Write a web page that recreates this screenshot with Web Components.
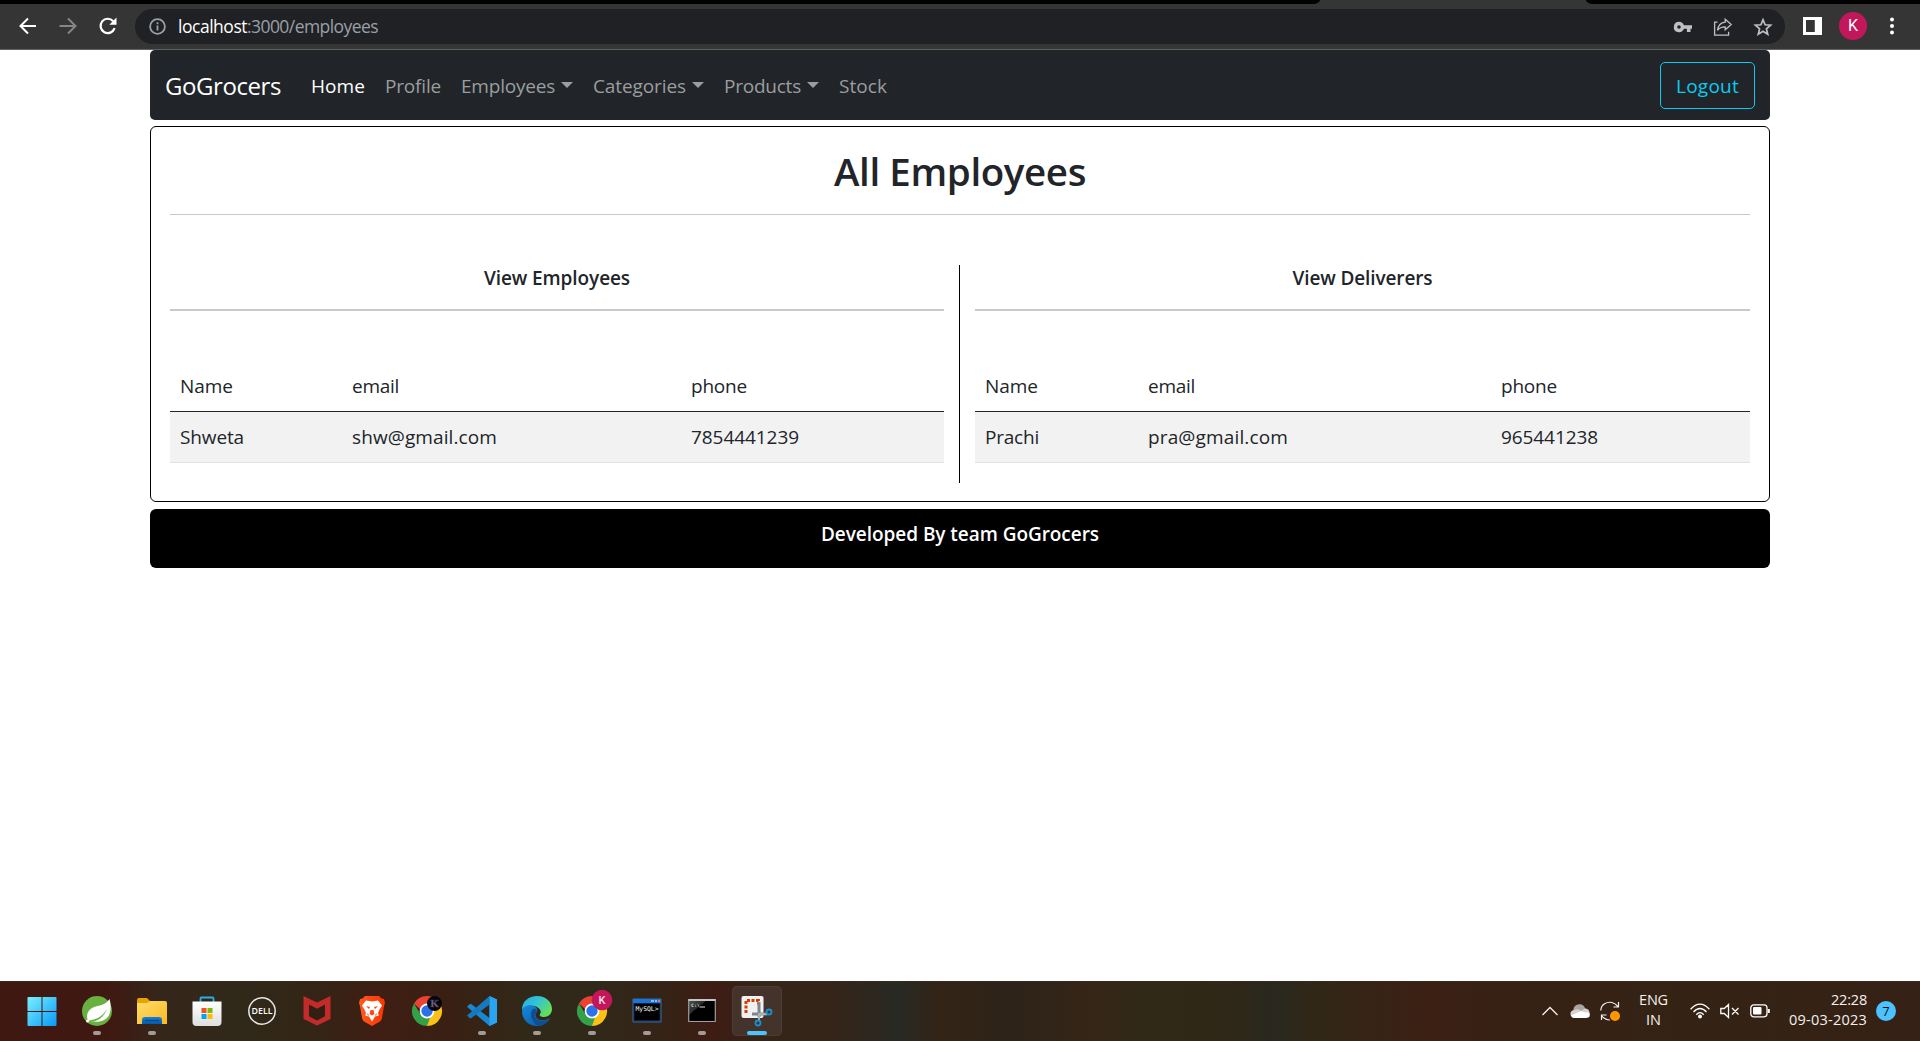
<!DOCTYPE html>
<html lang="en">
<head>
<meta charset="utf-8">
<title>GoGrocers</title>
<style>
html,body{margin:0;height:100%}
body{font-family:"Open Sans","Noto Sans",sans-serif;color:#212529;background:#fff;overflow:hidden}
desktop-shell{height:1041px}
</style>
</head>
<body>
<desktop-shell>
  <browser-bar slot="top"></browser-bar>
  <store-nav></store-nav>
  <content-card heading="All Employees">
    <people-panel caption="View Employees" caption-width="146" cols="172px 339px 1fr"
      rows='[[["Name",53],["email",47],["phone",56]],[["Shweta",64],["shw@gmail.com",145],["7854441239",108]]]'></people-panel>
    <people-panel caption="View Deliverers" caption-width="140" cols="163px 353px 1fr"
      rows='[[["Name",53],["email",47],["phone",56]],[["Prachi",54],["pra@gmail.com",140],["965441238",97]]]'></people-panel>
  </content-card>
  <page-footer label="Developed By team GoGrocers"></page-footer>
  <task-bar slot="bottom"></task-bar>
</desktop-shell>
<script>
const define=(name,html,init)=>customElements.define(name,class extends HTMLElement{
  connectedCallback(){
    if(this.shadowRoot)return;
    const t=document.createElement('template');
    t.innerHTML=typeof html==='function'?html(this):html;
    this.attachShadow({mode:'open'}).append(t.content.cloneNode(true));
    if(init)init(this);
  }
});

/* A run of text spaced evenly to fill a given width. */
define('fit-text',`<style>:host{display:inline-block;white-space:nowrap}span{display:inline-block;white-space:nowrap}</style><span><slot></slot></span>`,el=>{
  const s=el.shadowRoot.querySelector('span'),w=+el.getAttribute('w'),n=el.textContent.length;
  const now=s.getBoundingClientRect().width;
  if(now)s.style.letterSpacing=((w-now)/n)+'px';
  el.style.width=w+'px';
});

define('browser-bar',`<style>
:host{display:block;flex:none;background:#353535;border-bottom:1px solid #606060;height:49px;box-sizing:content-box}
.tabs{height:4px;display:flex;background:#353535}
.tabs i{background:#000;height:4px}
.tabs i:first-child{width:1320px;border-bottom-right-radius:7px 4px}
.tabs i:last-child{margin-left:266px;flex:1;border-bottom-left-radius:7px 4px}
.row{display:flex;align-items:center;height:44px}
svg{display:block;flex:none}
.omni{margin-left:17px;width:1650px;height:35px;border-radius:18px;background:#202124;display:flex;align-items:center;box-sizing:border-box;padding:0 12px 0 14px;margin-top:1px}
.url{margin-left:12px;font-size:17.500px;line-height:24px;color:#9aa0a6;flex:1;margin-top:-1px}
.url b{font-weight:400;color:#fff}
.av{width:28px;height:28px;border-radius:50%;background:#c2185b;color:#fff;font:16px/28px Roboto,sans-serif;text-align:center;margin-left:17px}
</style>
<div class="tabs"><i></i><i></i></div>
<div class="row">
 <svg style="margin-left:18px" width="20" height="20" viewBox="0 0 20 20" fill="none" stroke="#fff" stroke-width="2"><path d="M18 10H3M10 2.500 2.500 10l7.500 7.500"/></svg>
 <svg style="margin-left:20px" width="20" height="20" viewBox="0 0 20 20" fill="none" stroke="#868686" stroke-width="2"><path d="M1.500 10H17M10 2.500l7.500 7.500-7.500 7.500"/></svg>
 <svg style="margin-left:20px" width="20" height="20" viewBox="0 0 20 20" fill="none" stroke="#fff" stroke-width="2.200"><path d="M16.600 12.200A7.200 7.200 0 1 1 15.200 5.200"/><path d="M18.500 1.500v7.200h-7.200z" fill="#fff" stroke="none"/></svg>
 <div class="omni">
  <svg width="17" height="17" viewBox="0 0 17 17" fill="none" stroke="#9aa0a6" stroke-width="1.800"><circle cx="8.500" cy="8.500" r="7.400"/><path d="M8.500 7.500v5M8.500 4.200v2"/></svg>
  <span class="url"><b><fit-text w="69">localhost</fit-text></b><fit-text w="131">:3000/employees</fit-text></span>
  <svg width="20" height="20" viewBox="0 0 20 20"><path fill="#bfc0c2" fill-rule="evenodd" d="M6 4.800a5.200 5.200 0 0 1 4.900 3.500H19v3.500h-1.500v3.300h-3.600v-3.300h-3A5.200 5.200 0 1 1 6 4.800zm0 3.400a1.800 1.800 0 1 0 0 3.600 1.800 1.800 0 0 0 0-3.600z"/></svg>
  <svg style="margin-left:20px" width="20" height="20" viewBox="0 0 20 20" fill="none" stroke="#bfc0c2" stroke-width="1.300"><path d="M4.500 5.200H1.600v13h14v-3.500M12.200 2.200l6 5.300-6 5.300V9.900c-4 0-6 1-7.700 3.500.6-4.500 3.300-7.800 7.700-8.200z"/></svg>
  <svg style="margin-left:20px" width="20" height="20" viewBox="0 0 20 20" fill="none" stroke="#bfc0c2" stroke-width="1.700"><path d="m10 2.700 2.100 5.100 5.500.4-4.200 3.600 1.300 5.400-4.700-2.900-4.700 2.900 1.300-5.400-4.200-3.600 5.500-.4z"/></svg>
 </div>
 <svg style="margin-left:18px" width="19" height="18" viewBox="0 0 19 18"><path fill="#fff" fill-rule="evenodd" d="M0 0h19v18H0zM3 3v12h8.800V3z"/></svg>
 <div class="av">K</div>
 <svg style="margin-left:22px" width="6" height="18" viewBox="0 0 6 18" fill="#fff"><circle cx="3" cy="2.500" r="2"/><circle cx="3" cy="9" r="2"/><circle cx="3" cy="15.500" r="2"/></svg>
</div>`);

define('nav-link',el=>`<style>
:host{display:flex;align-items:center;padding:0 10px;font-size:19px;line-height:30px;color:#9b9d9e}
:host([active]){color:#fff}
i{margin:-2px 0 0 6px;border:6px solid transparent;border-top-color:currentColor;border-bottom:0}
</style><fit-text w="${el.getAttribute('w')}">${el.getAttribute('label')}</fit-text>${el.hasAttribute('menu')?'<i></i>':''}`);

define('store-nav',`<style>
:host{display:flex;align-items:center;height:70px;box-sizing:border-box;padding:0 15px;background:#212529;border-radius:5px;color:#fff}
.brand{font-size:24px;line-height:38px;margin:1px 20px 0 0}
nav{display:flex;flex:1;margin-top:2px}
button{all:unset;box-sizing:border-box;width:95px;height:47px;border:1px solid #0dcaf0;border-radius:5px;color:#0dcaf0;font-size:19px;line-height:30px;text-align:center;padding-top:2px}
</style>
<div class="brand"><fit-text w="116">GoGrocers</fit-text></div>
<nav>
<nav-link label="Home" w="54" active></nav-link><nav-link label="Profile" w="56"></nav-link>
<nav-link label="Employees" w="94" menu></nav-link><nav-link label="Categories" w="93" menu></nav-link>
<nav-link label="Products" w="77" menu></nav-link><nav-link label="Stock" w="48"></nav-link>
</nav>
<button><fit-text w="63">Logout</fit-text></button>`);

define('content-card',el=>`<style>
:host{display:block;box-sizing:border-box;height:376px;margin-top:6px;border:1px solid #000;border-radius:6px;padding:20px 19px 0}
h1{margin:0;font-size:38.500px;font-weight:600;line-height:48px;text-align:center}
hr{border:0;height:1px;background:#c8c9ca;margin:19px 0 50px}
.cols{display:grid;grid-template-columns:790px 775px;column-gap:15px;height:218px}
::slotted(:first-child){border-right:1px solid #000;padding-right:15px}
</style><h1><fit-text w="252">${el.getAttribute('heading')}</fit-text></h1><hr><div class="cols"><slot></slot></div>`);

define('people-panel',el=>{
  const rows=JSON.parse(el.getAttribute('rows'));
  const cells=r=>r.map(([t,w])=>`<span><fit-text w="${w}">${t}</fit-text></span>`).join('');
  return `<style>
:host{display:block;box-sizing:border-box;font-size:19px}
h2{margin:0;font-size:19px;font-weight:600;line-height:26px;text-align:center}
hr{border:0;height:2px;background:#c8c9ca;margin:18px 0 50px}
.r{display:grid;grid-template-columns:${el.getAttribute('cols')};padding:10px;line-height:30px;height:30px;border-bottom:1px solid #dee2e6;background:#f2f2f2}
.r.h{background:none;border-color:#212529}
</style><h2><fit-text w="${el.getAttribute('caption-width')}">${el.getAttribute('caption')}</fit-text></h2><hr>
<div class="r h">${cells(rows[0])}</div><div class="r">${cells(rows[1])}</div>`;
});

define('page-footer',el=>`<style>:host{display:block;box-sizing:border-box;height:59px;margin-top:7px;padding-top:10px;background:#000;color:#fff;border-radius:6px;text-align:center;font-size:19px;font-weight:600;line-height:30px}</style><fit-text w="278">${el.getAttribute('label')}</fit-text>`);

const chrome=`<path d="M15 15 2 7.500A15 15 0 0 1 28 7.500z" fill="#ea4335"/><path d="M15 15 28 7.500A15 15 0 0 1 15 30l-2-3z" fill="#fbc116"/><path d="M2 7.500 9 19l9 2.500L15 30A15 15 0 0 1 2 7.500z" fill="#34a047"/><path d="M15 7.500h13L20 20z" fill="#fbc116"/><path d="M2 7.500 15 7.500 9 14z" fill="#ea4335"/><circle cx="15" cy="15" r="7.400" fill="#fff"/><circle cx="15" cy="15" r="5.700" fill="#2b72e8"/>`;
const apps=[
['start',`<defs><linearGradient id="w" x1="0" y1="0" x2="30" y2="30" gradientUnits="userSpaceOnUse"><stop stop-color="#7df3ff"/><stop offset="1" stop-color="#0798f8"/></linearGradient></defs><path fill="url(#w)" d="M.5 2a1 1 0 0 1 1-1h13v14H.5zM15.500 1h13a1 1 0 0 1 1 1v13h-14zM.5 16h14v14h-13a1 1 0 0 1-1-1zM15.500 16h14v13a1 1 0 0 1-1 1h-13z"/>`,0],
['spring',`<circle cx="15" cy="15" r="15" fill="#68b13f"/><path d="M27.500 3c3 10 1 21-10 22.500-4 .5-8 0-11.500-.5-2-5-1-10 4-13C16 9 23 10 27.500 3z" fill="#fff"/><path d="M5 25c9-1 15-4 20-12-3 8-9 12.500-17 13" fill="#68b13f"/><circle cx="5.500" cy="25" r="1.500" fill="#fff"/>`,1],
['files',`<defs><linearGradient id="f" x2="1" y2="1"><stop stop-color="#ffdc6a"/><stop offset="1" stop-color="#fbbb22"/></linearGradient><linearGradient id="fb" x2="0" y2="1"><stop stop-color="#1680d8"/><stop offset="1" stop-color="#0659ac"/></linearGradient></defs><path d="M0 4a2 2 0 0 1 2-2h8l3 3v5H0z" fill="#e6a400"/><path d="M0 7h10l3-2h15a2 2 0 0 1 2 2v21H0z" fill="url(#f)"/><path d="M5 28v-4a3 3 0 0 1 3-3h14a3 3 0 0 1 3 3v4z" fill="url(#fb)"/><path d="M8 24.500h14" stroke="#064985" stroke-width="1.200"/>`,1],
['store',`<defs><linearGradient id="s" x2="0" y2="1"><stop stop-color="#fff"/><stop offset="1" stop-color="#dedede"/></linearGradient></defs><path d="M8.500 6V2.500q0-1 1-1h11q1 0 1 1V6" fill="none" stroke="#28afea" stroke-width="1.800"/><path d="M.5 5.500h29V26a4 4 0 0 1-4 4h-21a4 4 0 0 1-4-4z" fill="url(#s)"/><path d="M9.500 12h5v5h-5z" fill="#f25022"/><path d="M15.500 12h5v5h-5z" fill="#7fba00"/><path d="M9.500 18h5v5h-5z" fill="#00a4ef"/><path d="M15.500 18h5v5h-5z" fill="#ffb900"/>`,0],
['dell',`<circle cx="15" cy="15" r="13.200" fill="none" stroke="#e8e8e8" stroke-width="1.500"/><text x="4.500" y="18.200" textLength="21" lengthAdjust="spacingAndGlyphs" font-family="Open Sans" font-weight="600" font-size="8.800" fill="#fff">DELL</text>`,0],
['mcafee',`<path d="M1.500 0 15 6.500 28.500 0v23L15 29.500 1.500 23z" fill="#c32a2a"/><path d="M7 8.500l8 4.200 8-4.200v11.700l-8 4.200-8-4.200z" fill="#301f12"/>`,0],
['brave',`<defs><linearGradient id="b" x2="1"><stop stop-color="#ff5a1c"/><stop offset="1" stop-color="#ff3200"/></linearGradient></defs><path d="M8 0h14l2.500 2.500 2.500.5 1 4-1 3-2 12q-.5 2-2 3.500L15 30l-8-4.500Q5.500 24 5 22L3 10 2 7l1-4 2.500-.5z" fill="url(#b)"/><path d="M9 4.500l6 1 6-1 4 5-3 5-1 3 1 2-4 1-3 5-3-5-4-1 1-2-1-3-3-5z" fill="#fff"/><path d="M9 10l4 1-1 2zM21 10l-4 1 1 2zM13.500 14h3l1 4-2.500 1.500L12.500 18zM10 17l2 2-1 1zM20 17l-2 2 1 1z" fill="#fb4a18"/>`,0],
['chrome',chrome+`<circle cx="22.500" cy="7.500" r="7.500" fill="#05050c"/><text x="22.500" y="11.300" font-size="11" font-family="Liberation Serif" font-weight="700" text-anchor="middle" fill="#8d6a45" stroke="#3a3680" stroke-width=".5">K</text>`,0],
['code',`<path d="M22.500 0 30 3.500v23L22.500 30 0 10.800l2.500-2.500q1-.6 2 0L22.500 22z" fill="#1788d4"/><path d="M22.500 0 0 19.500l2.500 2.500q1 .6 2 0L22.500 8.500z" fill="#1678bd"/><path d="M22.500 0 30 3.500v23L22.500 30z" fill="#2ba4ef"/>`,1],
['edge',`<defs><linearGradient id="e1" x1="0" y1="0" x2="1" y2=".6"><stop stop-color="#28a8e4"/><stop offset=".5" stop-color="#32c5d4"/><stop offset="1" stop-color="#65df58"/></linearGradient><linearGradient id="e2" x2="1" y2="1"><stop stop-color="#1689dd"/><stop offset="1" stop-color="#0b559f"/></linearGradient></defs><path d="M0 14C0 5 7 0 15 0c9 0 15 6 15 13 0 5-4 8-8 8-3 0-5-1-4-3 2-2 0-7-6-8C7 9 2 11 0 14z" fill="url(#e1)"/><path d="M0 15c1-5 7-7 12-5 4 2 4 5 2 7-2 6 5 10 14 5-3 5-7 8-13 8C6 30 0 23 0 15z" fill="url(#e2)"/><path d="M11 13c-4 4-2 13 5 17 5 0 9-3 12-7-8 5-18 0-14-6 2-3 0-5-3-4z" fill="#0e4f91"/>`,1],
['chrome2',chrome+`<circle cx="25" cy="4" r="10.300" fill="#c2185b"/><text x="25" y="8" font-size="11" font-family="Roboto" font-weight="500" text-anchor="middle" fill="#f4dbe5">K</text>`,1],
['mysql',`<path d="M1 3h28v23H1z" fill="#0d2450" stroke="#497ba5" stroke-width=".8"/><path d="M1 3h28v4H1z" fill="#1974da"/><path d="M19 4h3v2h-3zM23 4h2v2h-2z" fill="#88baf1"/><path d="M26 4h2v2h-2z" fill="#ec7558"/><path d="M2.500 8h25v16h-25z" fill="#000"/><text x="3.500" y="15.200" textLength="23" lengthAdjust="spacingAndGlyphs" font-family="DejaVu Sans Mono" font-size="6.500" fill="#fff">MySQL&gt;</text>`,1],
['cmd',`<defs><linearGradient id="c" x2="1" y2="1"><stop stop-color="#555"/><stop offset=".35" stop-color="#292929"/><stop offset=".36" stop-color="#000"/></linearGradient></defs><path d="M1.700 3.500h26.600v22H1.700z" fill="url(#c)" stroke="#9b9da0" stroke-width="1.200"/><path d="M1.500 4h27" stroke="#c3c5c8" stroke-width="2"/><text x="4" y="11" textLength="9" lengthAdjust="spacingAndGlyphs" font-family="DejaVu Sans Mono" font-weight="700" font-size="4.500" fill="#ddd">C:\\</text><path d="M13 11h5" stroke="#ddd"/>`,1],
['snip',`<g transform="translate(-1 0)"><rect x=".5" y="0" width="22" height="22" rx="2" fill="#f1f1f1"/><path d="M5 17V4.500h12.500v4" fill="none" stroke="#d83b01" stroke-width="3" stroke-dasharray="3 1.500"/><path d="M18 6v15M11 18h15" stroke="#80858b" stroke-width="3"/><path d="M18 17v7M18 18h8" stroke="#aab0b5" stroke-width="2"/><circle cx="17" cy="27" r="2.500" fill="none" stroke="#1592d4" stroke-width="1.800"/><circle cx="28" cy="16" r="2.500" fill="none" stroke="#1592d4" stroke-width="1.800"/></g>`,2]
];
define('app-icon',el=>{const a=apps[+el.getAttribute('index')];return `<style>
:host{display:flex;flex-direction:column;align-items:center;width:55px;height:58px}
.tile{box-sizing:border-box;width:50px;height:50px;margin-top:4px;border-radius:5px;display:flex;flex-direction:column;align-items:center;padding-top:10px}
.on{background:#43332a;box-shadow:inset 0 0 0 1px #4d3c31}
svg{display:block;overflow:visible}
i{margin-top:5px;height:4px;border-radius:2px;width:8px;background:#a49b96}
.on i{width:20px;background:#4cc2ff}
</style><div class="tile ${a[2]===2?'on':''}"><svg width="30" height="30" viewBox="0 0 30 30">${a[1]}</svg>${a[2]?'<i></i>':''}</div>`});

define('task-bar',`<style>
:host{display:flex;flex:none;align-items:center;box-sizing:border-box;height:60px;padding:0 24px 1px 14px;color:#f4f0ee;background:linear-gradient(90deg,#401812 0,#401812 105px,#35261a 160px,#302919 240px,#332516 310px,#3f1e13 380px,#392013 450px,#302919 530px,#302919 590px,#342316 660px,#3e1c14 715px,#352418 760px,#352418 830px,#272923 900px,#332416 940px,#2d2319 1010px,#352517 1090px,#302916 1150px,#2f2717 1230px,#29281f 1275px,#302716 1310px,#3c2014 1430px,#362114 1500px,#342315 1700px,#352115 1920px);border-top:1px solid #332b1c}
.apps{display:flex;flex:1}
svg{display:block;flex:none}
.lang,.clock{font-size:14.500px;line-height:20px;text-align:center;margin-top:-2px}
.clock{text-align:right}
.n{width:20px;height:20px;border-radius:50%;background:#4cc2ff;color:#111;font-size:13px;line-height:20px;text-align:center;margin-left:9px}
</style>
<div class="apps">${apps.map((a,i)=>`<app-icon index="${i}"></app-icon>`).join('')}</div>
<svg width="16" height="10" viewBox="0 0 16 10" fill="none" stroke="#f4f0ee" stroke-width="1.300"><path d="m.5 9 7.500-7.500L15.500 9"/></svg>
<svg style="margin-left:12px" width="20" height="14" viewBox="0 0 20 14"><path d="M3.500 7a6 6 0 0 1 11.500-3l2 3L8 10z" fill="#aaa5a1"/><path d="M4 6q4-2 7 1l4-2.500q4 0 4.500 4-5 3-10 1L1 12Q-1 7 4 6z" fill="#d4d1cf"/><path d="M.8 11.500 11 7q4 2 8.500 1.500Q21 14 16 14H4q-2.500 0-3.200-2.500z" fill="#fff"/></svg>
<svg style="margin-left:10px" width="20" height="20" viewBox="0 0 20 20" fill="none" stroke="#f4f0ee" stroke-width="1.200"><path d="M.8 9.500C1 3 7 .5 12 1.500q3 .7 6 4M18.500 1v5h-5M1.500 19v-5h5M1.500 14.500Q5 19 10 19"/><circle cx="15" cy="15" r="5" fill="#ff9800" stroke="none"/></svg>
<div class="lang" style="margin-left:19px"><fit-text w="29">ENG</fit-text><br><fit-text w="15">IN</fit-text></div>
<svg style="margin-left:22px" width="20" height="16" viewBox="0 0 20 16" fill="none" stroke="#fff" stroke-width="1.300"><path d="M.6 6.200q9.400-10 18.800 0M3.500 9q6.500-7 13 0M6.300 11.700q3.700-4 7.400 0"/><circle cx="10" cy="13.500" r="2" fill="#fff" stroke="none"/></svg>
<svg style="margin-left:10px" width="20" height="16" viewBox="0 0 20 16" fill="none" stroke="#fff" stroke-width="1.300"><path d="M.8 5.500h3.500L8.500 1.500v13l-4.200-4H.8zM12 5l6.500 6.500M18.500 5 12 11.500"/></svg>
<svg style="margin-left:10px" width="20" height="14" viewBox="0 0 20 14" fill="none" stroke="#fff" stroke-width="1.300"><rect x=".8" y=".8" width="16.200" height="12" rx="3"/><path d="M18.800 5v4" stroke-width="2"/><rect x="3" y="3" width="8.500" height="7.600" rx="1" fill="#fff" stroke="none"/></svg>
<div class="clock" style="margin-left:19px"><fit-text w="36">22:28</fit-text><br><fit-text w="78">09-03-2023</fit-text></div>
<div class="n">7</div>`);

define('desktop-shell',`<style>
:host{display:flex;flex-direction:column}
main{flex:1;min-height:0;width:1620px;margin:0 auto}
</style><slot name="top"></slot><main><slot></slot></main><slot name="bottom"></slot>`);
</script>
</body>
</html>
